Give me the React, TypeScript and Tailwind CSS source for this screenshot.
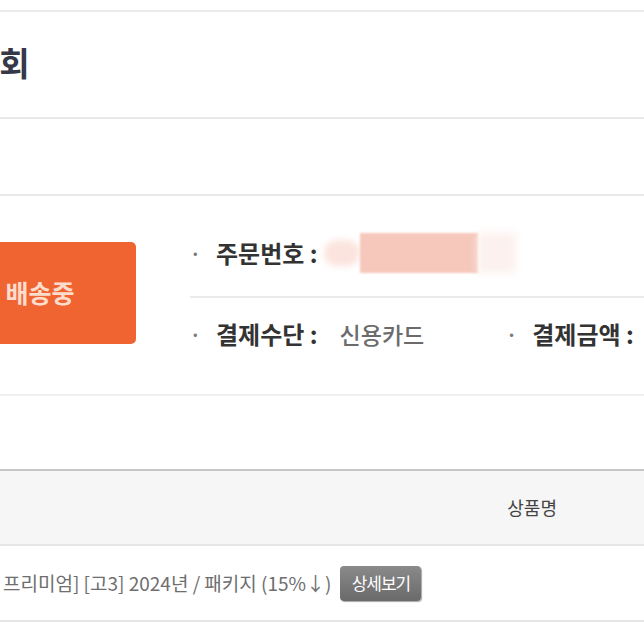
const FONT = "font-['Noto_Sans_CJK_KR','Noto_Sans',sans-serif]";

const InfoItem = ({ label, value }: { label: string; value?: React.ReactNode }) => (
  <div className="flex items-center">
    <span className="w-[26px] text-[#7a7a7a] text-[18px] font-bold">·</span>
    <span className="text-[24px] font-bold text-[#333]">{label} :</span>
    {value}
  </div>
);

export default function App() {
  return (
    <div className={`${FONT} w-[644px] h-[644px] overflow-hidden bg-white`}>
      <div className="h-[10px]" />
      <div className="border-t-2 border-[#ebebeb] h-[107px] flex items-center">
        <h1 className="ml-[-31px] text-[33px] font-bold text-[#353847] leading-none pb-[4px]">조회</h1>
      </div>
      <div className="border-t-2 border-[#e8e8e8] h-[77px]" />
      <div className="border-t-2 border-[#e8e8e8] h-[200px] flex items-start">
        <div className="mt-[46px] ml-[-52px] w-[188px] h-[102px] rounded-[5px] bg-[#f06432] flex items-center justify-center">
          <span className="text-[25px] font-bold text-[#fcdccd] mr-[4px]">배송중</span>
        </div>
        <div className="flex-1 ml-[54px] pt-[30px] flex flex-col">
          <div className="h-[72px] flex items-center border-b-2 border-[#eaeaea] pb-[16px]">
            <InfoItem
              label="주문번호"
              value={
                <div className="ml-[6px] flex items-center">
                  <div className="w-[36px] h-[26px] rounded-full bg-[#fbe4de] blur-[3px]" />
                  <div className="w-[118px] h-[40px] bg-[#f5c8bb] blur-[1px]" />
                  <div className="w-[38px] h-[40px] bg-[#fcf1ee] blur-[4px]" />
                </div>
              }
            />
          </div>
          <div className="h-[76px] flex items-center pb-[4px]">
            <InfoItem
              label="결제수단"
              value={<span className="ml-[22px] text-[23px] font-medium text-[#6b6b6b]">신용카드</span>}
            />
            <div className="ml-[82px]">
              <InfoItem label="결제금액" />
            </div>
          </div>
        </div>
      </div>
      <div className="border-t-2 border-[#efefef] h-[75px]" />
      <div className="border-t-2 border-[#c6c6c6] h-[75px] bg-[#f6f6f6] flex items-center justify-end pr-[87px]">
        <span className="text-[18px] text-[#444]">상품명</span>
      </div>
      <div className="border-t-2 border-[#e6e6e6] border-b-2 h-[78px] flex items-center">
        <span className="ml-[3px] text-[19px] text-[#6e6e6e] whitespace-nowrap">
          프리미엄] [고3] 2024년 / 패키지 (15%↓)
        </span>
        <button className="ml-[9px] h-[35px] w-[81px] rounded-[4px] bg-gradient-to-b from-[#8a8a8a] to-[#6a6a6a] shadow-[1px_1px_1px_rgba(0,0,0,0.35)] text-white text-[17px] tracking-[-1px]">
          상세보기
        </button>
      </div>
    </div>
  );
}
